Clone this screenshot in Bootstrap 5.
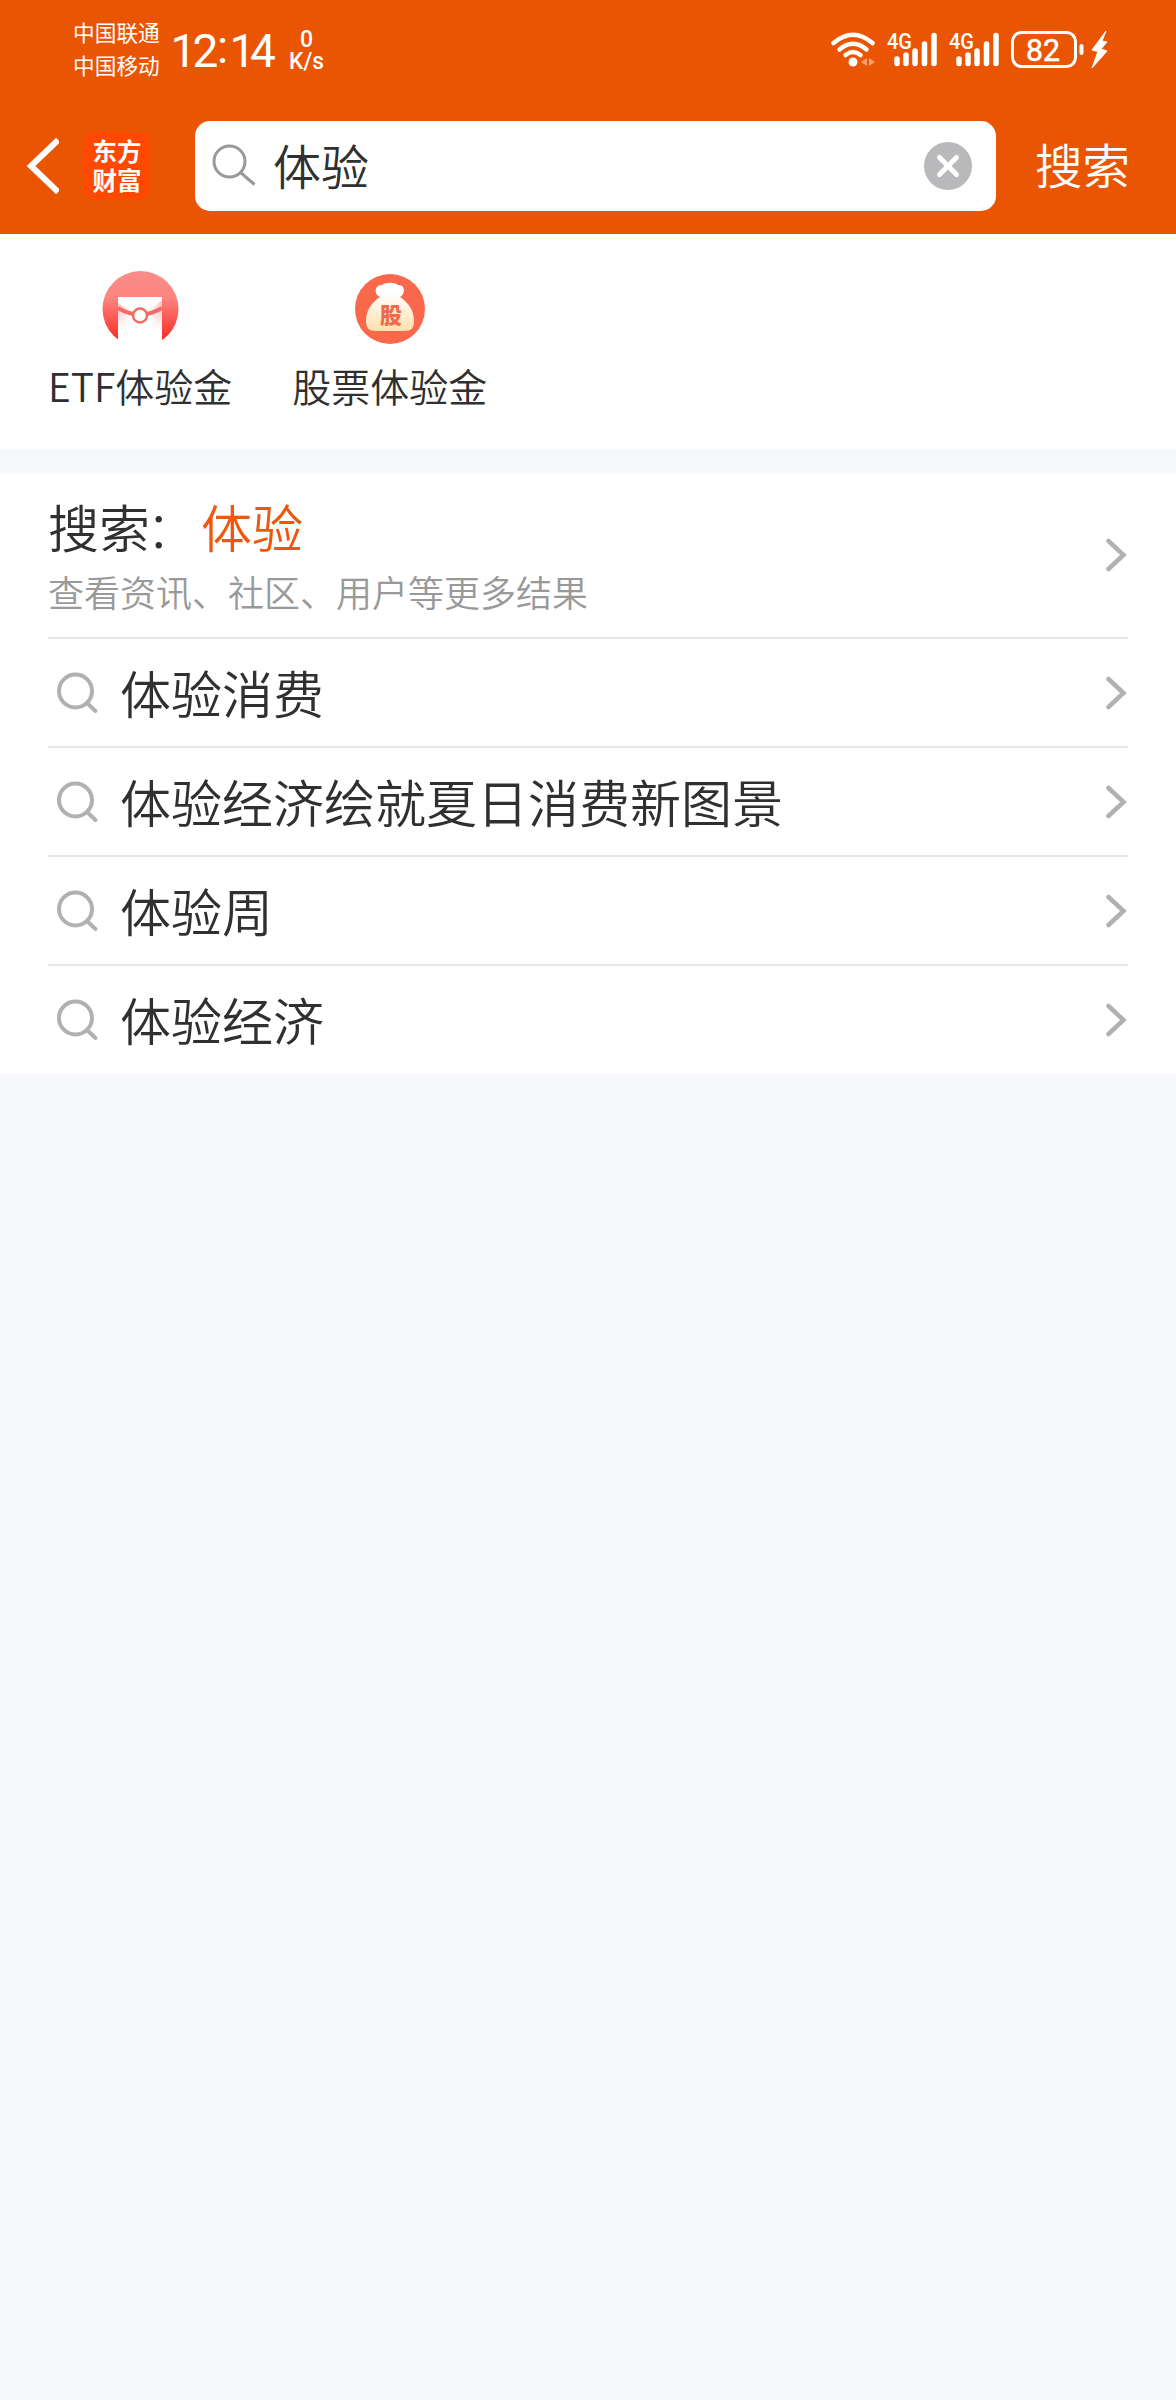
<!DOCTYPE html>
<html lang="zh-CN">
<head>
<meta charset="utf-8">
<meta name="viewport" content="width=device-width, initial-scale=1">
<title>搜索</title>
<link href="https://cdn.jsdelivr.net/npm/bootstrap@5.3.0/dist/css/bootstrap.min.css" rel="stylesheet">
<style>
body{background:#f7f8fb;color:#303030;font-family:"Noto Sans CJK SC",sans-serif;font-weight:350;min-height:2400px;line-height:1}
svg{display:block;flex:none}
.topbar{background:#ea5504;height:234px;color:#fff}
.status{height:100px;padding:0 68px 0 73px}
.carrier{font-size:21.700px;line-height:33px;width:87px;font-weight:400;white-space:nowrap;padding-bottom:5px}
.searchrow{height:90px;margin-top:21px;padding-left:26px}
.brand{width:66px;height:66px;border-radius:11px;background:#ff4800;box-shadow:0 0 3px #ff4800;font-size:24.500px;line-height:29px;font-weight:700;margin-left:25px;padding-top:3px}
.field{width:801px;height:90px;border-radius:15px;margin-left:45px;padding:0 24px 0 17px;color:#303030;font-size:48px}
.field span{padding:0 0 5px 1px}
.go{font-size:47.500px;margin-left:39px;padding-bottom:5px}
.shortcuts{height:215px;padding:33px 48px 0}
.shortcut{font-size:39px}
.shortcut+.shortcut{margin-left:60px}
.shortcut span{line-height:50px;margin-top:9px}
.results{margin-top:24px;padding:0 48px;font-size:51px}
.hit{height:109px;border-bottom:2px solid #e6e6e6;padding-right:1px}
.hit:last-child{border-bottom:0;height:108px;padding-bottom:1px}
.hit.first{height:166px}
.hit>span{padding-bottom:1px}
.hint{font-size:36px;color:#999;line-height:50px;margin-top:4px;padding-bottom:5px}
.query{line-height:72px}
.colon{margin:0 4px 0 -4px;font-weight:300}
.accent{color:#f2560d}
</style>
<script src="https://cdn.jsdelivr.net/npm/bootstrap@5.3.0/dist/js/bootstrap.bundle.min.js"></script>
</head>
<body>
<svg width="0" height="0" class="position-absolute" aria-hidden="true">
  <symbol id="lens" viewBox="0 0 44 44"><g fill="none" stroke="#b1b1b1" stroke-width="4" stroke-linecap="round"><circle cx="19.5" cy="20" r="16.5"/><path d="M31.500 32.500L39.500 40"/></g></symbol>
  <symbol id="next" viewBox="0 0 22 34"><path d="M3.500 3L18.500 17L3.500 31" fill="none" stroke="#b1b1b1" stroke-width="4.500" stroke-linecap="round"/></symbol>
</svg>
<header class="topbar">
  <div class="status d-flex align-items-center justify-content-between">
    <div class="d-flex align-items-center">
      <div class="carrier">中国联通<br>中国移动</div>
      <svg width="166" height="66" fill="#fff" font-family="Roboto">
        <text x="10.500 32.500 57 69.500 90" dy="0 0 -4 4" y="50" font-size="46" font-weight="400">12:14</text>
        <g font-weight="500"><text x="140" y="30" font-size="23">0</text><text x="129" y="52" font-size="23" textLength="35" lengthAdjust="spacingAndGlyphs">K/s</text></g>
      </svg>
    </div>
    <svg width="278" height="44" viewBox="830 28 278 44" fill="none" stroke="#fff">
      <g stroke-width="4.500" stroke-linecap="round"><path d="M833.500 43Q853 26.500 872.500 43"/><path d="M839.500 49.500Q853 38 866.500 49.500"/><path d="M845.500 55Q853 49 860.500 55"/></g>
      <circle cx="853" cy="62" r="4.500" fill="#fff" stroke="none"/>
      <path d="M861 62l6-4v8zM875 62l-6-4v8z" fill="#f6a06f" stroke="none"/>
      <g id="sig"><path d="M897 59V63.500M906 55V63.500M915 51V63.500M924.500 44V63.500M934 35.500V63.500" stroke-width="5.500" stroke-linecap="round"/>
      <text x="887" y="49" font-family="Roboto" font-weight="500" font-size="22" textLength="25" lengthAdjust="spacingAndGlyphs" fill="#fff" stroke="none">4G</text></g>
      <use href="#sig" x="62"/>
      <rect x="1012.500" y="32.500" width="63" height="34" rx="9" stroke-width="3"/>
      <path d="M1081.500 46V53" stroke-width="4" stroke-linecap="round"/>
      <text x="1026" y="60.500" font-family="Roboto" font-weight="400" font-size="32" textLength="34" lengthAdjust="spacingAndGlyphs" fill="#fff" stroke="#fff" stroke-width=".6">82</text>
      <path d="M1106 31L1092 50L1098 51.500L1092 68L1107 51L1101 49L1107 42L1102 41Z" fill="#fff" stroke="#fff" stroke-width="1"/>
    </svg>
  </div>
  <div class="searchrow d-flex align-items-center">
    <svg width="33" height="58" viewBox="0 0 33 58"><path d="M30 5L5 29L30 53" fill="none" stroke="#fff" stroke-width="6" stroke-linecap="square"/></svg>
    <div class="brand text-center">东方<br>财富</div>
    <div class="field bg-white d-flex align-items-center">
      <svg width="44" height="44" viewBox="212 144 44 44"><g fill="none" stroke="#999" stroke-width="3"><circle cx="229.500" cy="161.500" r="15.500"/><path d="M240.500 172.500L254.500 184.500"/></g></svg>
      <span class="ms-3 me-auto">体验</span>
      <svg width="48" height="48"><circle cx="24" cy="24" r="24" fill="#b9b9bb"/><path d="M15.500 15.500L32.500 32.500M32.500 15.500L15.500 32.500" stroke="#fff" stroke-width="5" stroke-linecap="round"/></svg>
    </div>
    <span class="go">搜索</span>
  </div>
</header>
<section class="shortcuts bg-white d-flex">
  <div class="shortcut d-flex flex-column align-items-center">
    <svg width="84" height="84" viewBox="98 267 84 84">
      <defs><linearGradient id="g1" x2="0" y2="1"><stop stop-color="#fa8c8a"/><stop offset=".35" stop-color="#fd8580"/><stop offset="1" stop-color="#fa1c14"/></linearGradient>
      <linearGradient id="g2"><stop stop-color="#ffc6c2"/><stop offset=".3" stop-color="#fff"/><stop offset=".7" stop-color="#fff"/><stop offset="1" stop-color="#ffc6c2"/></linearGradient>
      <linearGradient id="g3" x2="0" y2="1"><stop stop-color="#fff" stop-opacity="0"/><stop offset=".5" stop-color="#fff"/></linearGradient></defs>
      <circle cx="140.500" cy="309" r="38" fill="url(#g1)"/>
      <path d="M118 297H162V350H118Z" fill="url(#g2)"/><path d="M118 310H162V350H118Z" fill="url(#g3)"/>
      <path d="M118 297H162V300L150 310H130L118 303Z" fill="#fff"/>
      <path d="M118 308Q140 321 162 308" fill="none" stroke="#f76963" stroke-width="4"/>
      <circle cx="140" cy="315.500" r="7" fill="#fff" stroke="#f76963" stroke-width="2.500"/>
    </svg>
    <span>ETF体验金</span>
  </div>
  <div class="shortcut d-flex flex-column align-items-center">
    <svg width="84" height="84" viewBox="347 267 84 84">
      <defs><linearGradient id="g4" x2="0" y2="1"><stop offset=".2" stop-color="#fff"/><stop offset="1" stop-color="#ffe0ac"/></linearGradient></defs>
      <circle cx="389" cy="309" r="35" fill="#fa684b"/>
      <path d="M379 297C372 294 374 284 381 285C384 282 394 282 397 285C404 284 405 294 399 297C408 303 413 311 413 321C413 328 410 331 404 331H374C368 331 365 328 365 321C365 311 370 303 379 297Z" fill="url(#g4)"/>
      <text x="390" y="323" text-anchor="middle" font-size="22" font-weight="900" fill="#f2684c">股</text>
    </svg>
    <span>股票体验金</span>
  </div>
</section>
<main class="results bg-white">
  <div class="hit first d-flex align-items-center justify-content-between">
    <div><div class="query">搜索<span class="colon">：</span><span class="accent">体验</span></div><div class="hint">查看资讯、社区、用户等更多结果</div></div>
    <svg width="22" height="34"><use href="#next"/></svg>
  </div>
  <div class="hit d-flex align-items-center"><svg class="ms-2" width="44" height="44"><use href="#lens"/></svg><span class="ps-3 ms-1 me-auto">体验消费</span><svg width="22" height="34"><use href="#next"/></svg></div>
  <div class="hit d-flex align-items-center"><svg class="ms-2" width="44" height="44"><use href="#lens"/></svg><span class="ps-3 ms-1 me-auto">体验经济绘就夏日消费新图景</span><svg width="22" height="34"><use href="#next"/></svg></div>
  <div class="hit d-flex align-items-center"><svg class="ms-2" width="44" height="44"><use href="#lens"/></svg><span class="ps-3 ms-1 me-auto">体验周</span><svg width="22" height="34"><use href="#next"/></svg></div>
  <div class="hit d-flex align-items-center"><svg class="ms-2" width="44" height="44"><use href="#lens"/></svg><span class="ps-3 ms-1 me-auto">体验经济</span><svg width="22" height="34"><use href="#next"/></svg></div>
</main>
</body>
</html>
